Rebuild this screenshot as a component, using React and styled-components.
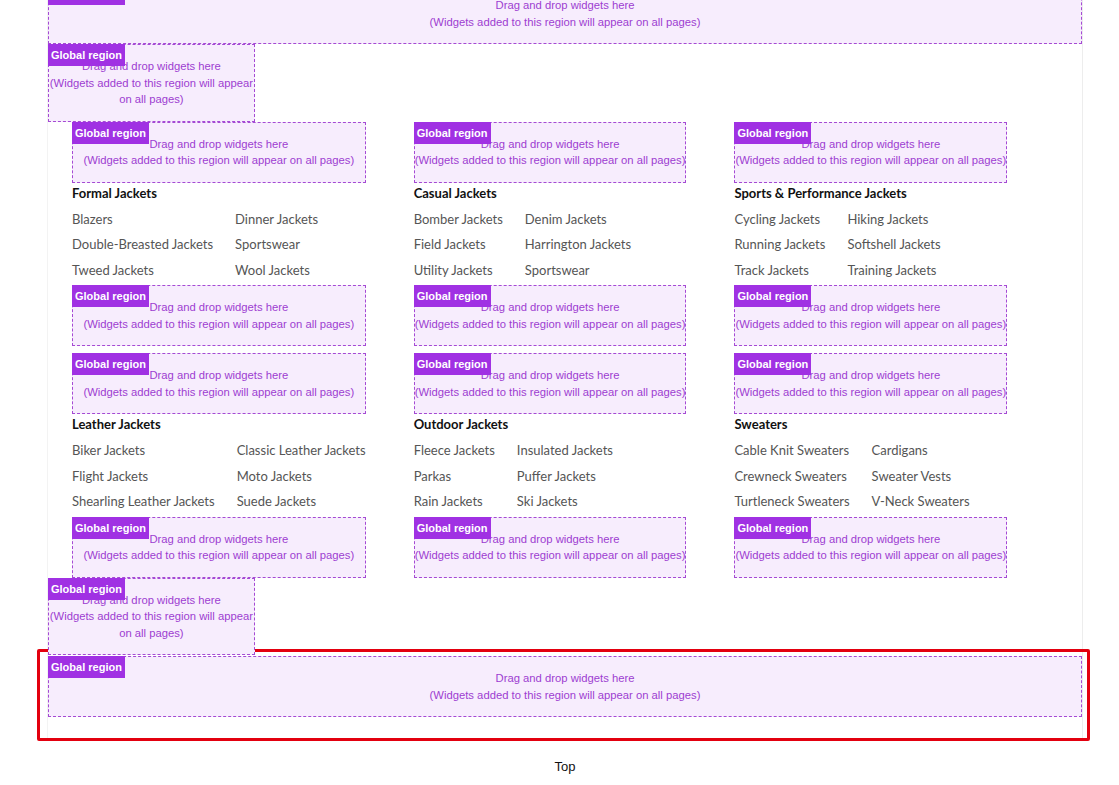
import React from 'react';
import styled, { createGlobalStyle } from 'styled-components';

const GlobalStyle = createGlobalStyle`
  html, body { margin: 0; padding: 0; background: #ffffff; }
  body { font-family: "Liberation Sans", Arial, sans-serif; overflow: hidden; }
`;

const Page = styled.div`
  padding-left: 47px;
  width: 1036px;
`;

const Panel = styled.div`
  margin-top: -17px;
  border-left: 1px solid #f3f3f3;
  border-right: 1px solid #ededed;
  background: #fff;
`;

const RegionBox = styled.div`
  position: relative;
  box-sizing: border-box;
  width: ${(p) => p.$width || 'auto'};
  background: #f7edfd;
  border: 1px dashed #a54ad4;
  padding: 13px 0;
  text-align: center;
  font-family: "Liberation Sans", Arial, sans-serif;
  font-size: 11.25px;
  line-height: 16.5px;
  color: #9d3dd1;
`;

const RegionLabel = styled.span`
  position: absolute;
  top: -1px;
  left: -1px;
  height: 22px;
  padding: 0 3px;
  background: #a031e3;
  color: #ffffff;
  font-family: "Liberation Sans", Arial, sans-serif;
  font-weight: 700;
  font-size: 11px;
  line-height: 22px;
  white-space: nowrap;
`;

const RegionLine = styled.div``;

const Region = ({ width }) => (
  <RegionBox $width={width}>
    <RegionLine>Drag and drop widgets here</RegionLine>
    <RegionLine>(Widgets added to this region will appear on all pages)</RegionLine>
    <RegionLabel>Global region</RegionLabel>
  </RegionBox>
);

const MenuGrid = styled.div`
  display: grid;
  grid-template-columns: repeat(3, max-content);
  column-gap: 48px;
  row-gap: 7px;
  padding: 0 24px;
  align-items: start;
`;

const Column = styled.div`
  display: flex;
  flex-direction: column;
`;

const Heading = styled.h3`
  margin: 0;
  font-family: Lato, "Noto Sans", sans-serif;
  font-weight: 700;
  font-size: 13px;
  line-height: 20px;
  color: #111111;
`;

const Links = styled.ul`
  display: grid;
  grid-template-columns: repeat(2, max-content);
  column-gap: 22px;
  margin: 0;
  padding: 4px 0 2px;
  list-style: none;
`;

const LinkItem = styled.li`
  font-family: Lato, "Noto Sans", sans-serif;
  font-size: 13px;
  line-height: 25.5px;
  color: #555555;
  white-space: nowrap;
`;

const Selected = styled.div`
  margin: -6px -8px 0 -11px;
  border: 3px solid #e3000f;
  border-radius: 2px;
  padding: 4px 5px 21px 8px;
`;

const TopLink = styled.div`
  margin-top: 17px;
  text-align: center;
  font-family: "Liberation Sans", Arial, sans-serif;
  font-size: 13px;
  line-height: 18px;
  color: #111;
`;

const groups = [
  {
    title: 'Formal Jackets',
    links: ['Blazers', 'Dinner Jackets', 'Double-Breasted Jackets', 'Sportswear', 'Tweed Jackets', 'Wool Jackets'],
  },
  {
    title: 'Casual Jackets',
    links: ['Bomber Jackets', 'Denim Jackets', 'Field Jackets', 'Harrington Jackets', 'Utility Jackets', 'Sportswear'],
  },
  {
    title: 'Sports & Performance Jackets',
    links: ['Cycling Jackets', 'Hiking Jackets', 'Running Jackets', 'Softshell Jackets', 'Track Jackets', 'Training Jackets'],
  },
  {
    title: 'Leather Jackets',
    links: ['Biker Jackets', 'Classic Leather Jackets', 'Flight Jackets', 'Moto Jackets', 'Shearling Leather Jackets', 'Suede Jackets'],
  },
  {
    title: 'Outdoor Jackets',
    links: ['Fleece Jackets', 'Insulated Jackets', 'Parkas', 'Puffer Jackets', 'Rain Jackets', 'Ski Jackets'],
  },
  {
    title: 'Sweaters',
    links: ['Cable Knit Sweaters', 'Cardigans', 'Crewneck Sweaters', 'Sweater Vests', 'Turtleneck Sweaters', 'V-Neck Sweaters'],
  },
];

export default function App() {
  return (
    <>
      <GlobalStyle />
      <Page>
        <Panel>
          <Region />
          <Region width="20%" />
          <MenuGrid>
            {groups.map((g) => (
              <Column key={g.title}>
                <Region />
                <Heading>{g.title}</Heading>
                <Links>
                  {g.links.map((l, i) => (
                    <LinkItem key={i}>{l}</LinkItem>
                  ))}
                </Links>
                <Region />
              </Column>
            ))}
          </MenuGrid>
          <Region width="20%" />
          <Selected>
            <Region />
          </Selected>
        </Panel>
        <TopLink>Top</TopLink>
      </Page>
    </>
  );
}
